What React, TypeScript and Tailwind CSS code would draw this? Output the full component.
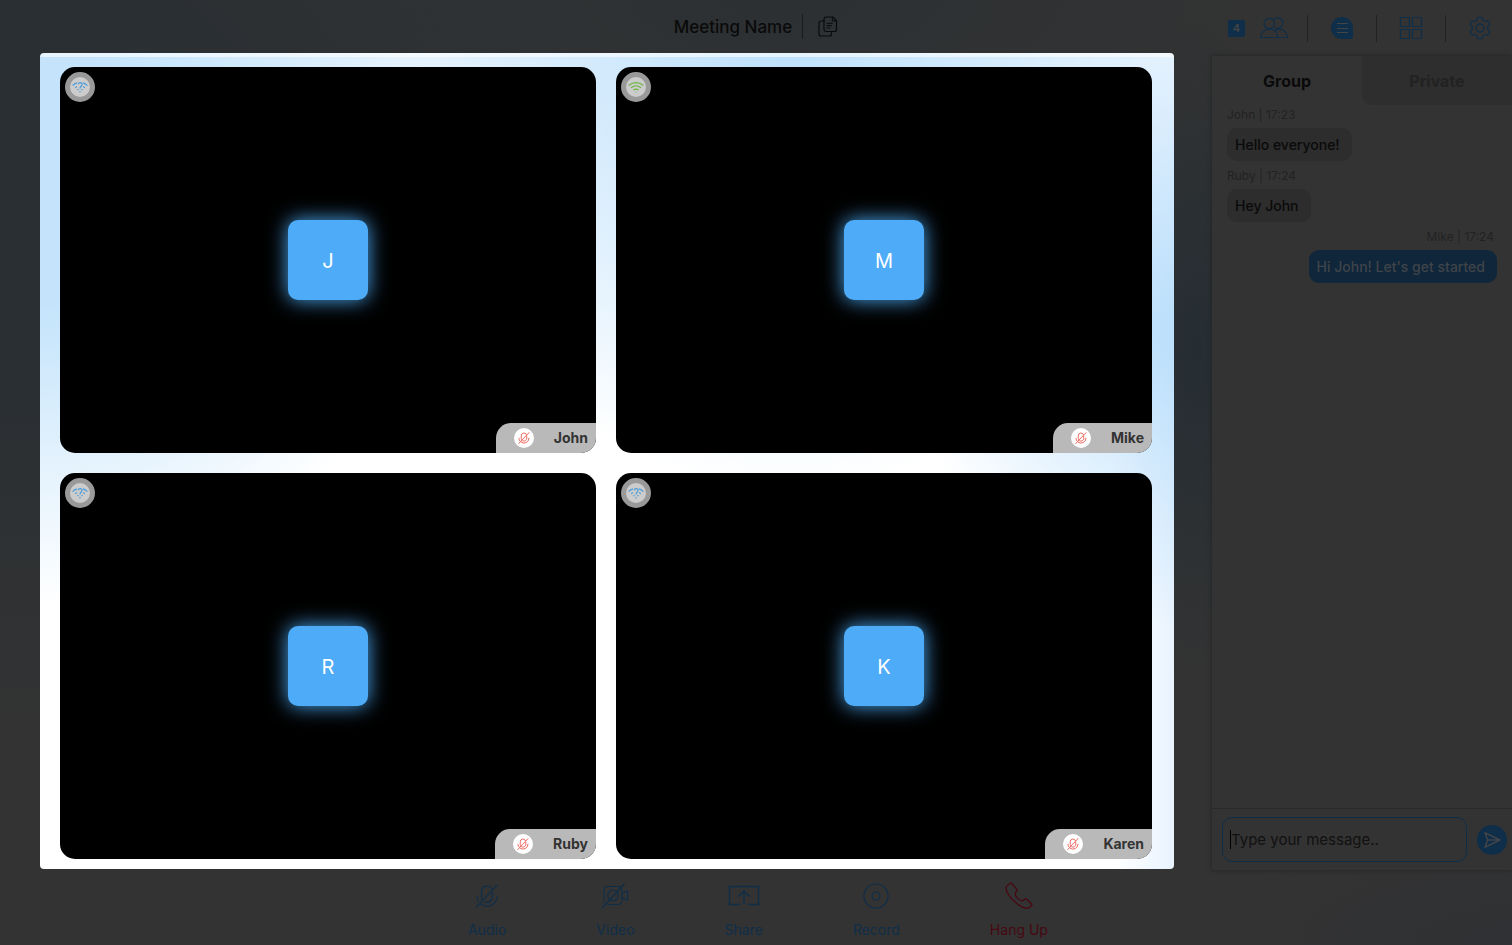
import React from "react";

type Participant = { name: string; known: boolean };

const participants: Participant[] = [
  { name: "John", known: false },
  { name: "Mike", known: true },
  { name: "Ruby", known: false },
  { name: "Karen", known: false },
];

const messages = [
  { from: "John", time: "17:23", text: "Hello everyone!", own: false },
  { from: "Ruby", time: "17:24", text: "Hey John", own: false },
  { from: "Mike", time: "17:24", text: "Hi John! Let's get started", own: true },
];

function CopyIcon() {
  return (
    <svg width="20" height="22" viewBox="0 0 20 22" fill="none" stroke="currentColor" strokeWidth="1.2" strokeLinejoin="round" strokeLinecap="round">
      <path d="M8 1h6.700L18.500 4.800v8.700a2 2 0 0 1-2 2H8a2 2 0 0 1-2-2V3a2 2 0 0 1 2-2Z" />
      <path d="M14.300 1.200v3.800h4M9 7.300h5.300M9 9.600h4.500M9 11.900h3" strokeWidth="1" />
      <path d="M5.800 5H3a2 2 0 0 0-2 2v11a2 2 0 0 0 2 2h8.500a2 2 0 0 0 2-2v-2.300" />
    </svg>
  );
}

function PeopleIcon() {
  return (
    <svg width="28" height="22" viewBox="0 0 28 22" fill="none" stroke="currentColor" strokeWidth="1.2" strokeLinejoin="round">
      <circle cx="9.300" cy="6.500" r="5.200" />
      <path d="M13.700 2.700a5.200 5.200 0 1 1 .9 7.500" />
      <path d="M.7 20.500c.4-5 3.800-8.300 8.600-8.300s8.200 3.300 8.600 8.300Z" />
      <path d="M14.800 14c1.200-1.100 2.600-1.800 4.300-1.800 4.600 0 7.800 3.300 8.200 8.300h-9.400" />
    </svg>
  );
}

function ChatIcon() {
  return (
    <svg width="24" height="24" viewBox="0 0 24 24">
      <path d="M12 1a11 11 0 1 0 0 22h9a2 2 0 0 0 2-2v-9A11 11 0 0 0 12 1Z" fill="currentColor" />
      <path d="M7.500 7.500h10M7.500 12.500h10M7.500 16.500h10" stroke="#444" strokeWidth="1.200" strokeLinecap="round" />
    </svg>
  );
}

function GridIcon() {
  return (
    <svg width="24" height="24" viewBox="0 0 24 24" fill="none" stroke="currentColor" strokeWidth="1.200">
      <path d="M1.500 1.500h9v9h-9zM13.500 1.500h9v9h-9zM1.500 13.500h9v9h-9zM13.500 13.500h9v9h-9z" />
    </svg>
  );
}

function GearIcon() {
  return (
    <svg width="24" height="24" viewBox="0 0 24 24" fill="none" stroke="currentColor" strokeWidth="1.200" strokeLinejoin="round">
      <path d="M10.300 1.300h3.400q.6 0 .7.600l.4 2.400 2.100 1.200 2.300-.8q.6-.2.900.3l1.700 3q.3.500-.2.900l-1.900 1.800v2.600l1.900 1.800q.5.400.2.900l-1.700 3q-.3.500-.9.300l-2.300-.8-2.100 1.200-.4 2.400q-.1.600-.7.600h-3.400q-.6 0-.7-.6l-.4-2.400-2.100-1.200-2.300.8q-.6.200-.9-.3l-1.700-3q-.3-.5.200-.9l1.900-1.800v-2.600L2.400 8.900q-.5-.4-.2-.9l1.700-3q.3-.5.900-.3l2.300.8 2.100-1.200.4-2.400q.1-.6.700-.6Z" />
      <circle cx="12" cy="12" r="3.900" />
    </svg>
  );
}

function MicOffIcon({ className }: { className?: string }) {
  return (
    <svg className={className} viewBox="0 0 24 24" fill="none" stroke="currentColor" strokeLinecap="round">
      <path d="M7.500 16.200a5.500 5.500 0 0 1-1-3.200V7.500a5.500 5.500 0 0 1 10.600-2M17.500 8.500V13a5.500 5.500 0 0 1-8 4.800" />
      <path d="M2 12.500c0 1.800.5 3.400 1.400 4.900M6 20.200a10 10 0 0 0 16-7.700" />
      <path d="M1.500 23 22 1.200" />
    </svg>
  );
}

function VideoOffIcon() {
  return (
    <svg width="28" height="26" viewBox="0 0 28 26" fill="none" stroke="currentColor" strokeWidth="1.100" strokeLinecap="round" strokeLinejoin="round">
      <path d="M3.300 19a4 4 0 0 1-.3-1.500v-10a4 4 0 0 1 4-4h10q1 0 1.800.4M20.500 5.800q.5.800.5 1.700v10a4 4 0 0 1-4 4H7" />
      <circle cx="12" cy="12.500" r="5.300" />
      <path d="M21 10.500l5.500-3v10L21 14.500" />
      <path d="M1.500 24.500 23 1.200" strokeWidth="1.400" />
    </svg>
  );
}

function ShareIcon() {
  return (
    <svg width="32" height="24" viewBox="0 0 32 24" fill="none" stroke="currentColor" strokeWidth="1.400">
      <path d="M11.500 20.500H1.500v-18h29v18h-10M16 20.500V7.500M10.500 12.500 16 7l5.500 5.500" />
    </svg>
  );
}

function RecordIcon() {
  return (
    <svg width="26" height="26" viewBox="0 0 26 26" fill="none" stroke="currentColor" strokeWidth="1.200">
      <circle cx="13" cy="13" r="12" />
      <circle cx="13" cy="13" r="4" />
    </svg>
  );
}

function PhoneIcon() {
  return (
    <svg width="28" height="28" viewBox="0 0 28 28" fill="none" stroke="currentColor" strokeWidth="1.300" strokeLinejoin="round">
      <path d="M6.500 1.300 12 7.600c.4.500.4 1-.1 1.500-2.400 2-2.400 4.200.7 7.300 3.200 3 5.400 3.100 7.400.7.400-.5 1-.5 1.500-.1l5 5c.5.500.5 1 .1 1.500-2.800 3.600-6.900 4.400-14.700-1.900C4.700 15.200.5 9.500 1.100 5.700c.3-1.800 2.200-3.400 3.900-4.500.5-.4 1-.3 1.500.1Z" />
    </svg>
  );
}

function SignalIcon({ known }: { known: boolean }) {
  return known ? (
    <svg width="16" height="12" viewBox="0 0 16 12" fill="none" stroke="#6cb83f" strokeWidth="1.200" strokeLinecap="round">
      <path d="M1 4.200c4-3.500 10-3.500 14 0M3.500 6.500c2.700-2.100 6.300-2.100 9 0M5.800 8.800c1.400-.9 3-.9 4.400 0" />
      <circle cx="8" cy="11" r=".5" fill="#6cb83f" stroke="none" />
    </svg>
  ) : (
    <svg width="16" height="12" viewBox="0 0 16 12" fill="none" stroke="#4d9ddb" strokeWidth="1.200">
      <path d="M.6 4.600C1.900 3.300 3.400 2.400 5 1.900M15.400 4.600C14.100 3.300 12.600 2.400 11 1.900" />
      <path d="M3.200 6.700l1.700-1.100M12.800 6.700l-1.700-1.100" />
      <path d="M6.200 3.300c.2-2.300 3.700-2.300 3.900-.2.100 1.900-2.100 1.900-2.100 4.500" />
      <path d="M5.200 8.700h1.600M9.200 8.700h1.600M7.200 10.900h1.600" strokeWidth="1" />
    </svg>
  );
}

function Tile({ name, known }: Participant) {
  return (
    <section aria-label={name} className="relative flex items-center justify-center overflow-hidden rounded-[15px] bg-black">
      <div className="absolute top-[5px] left-[5px] flex size-[30px] items-center justify-center rounded-full border-5 border-[#999] bg-[#ccc]">
        <SignalIcon known={known} />
      </div>
      <div className="flex size-20 items-center justify-center rounded-[10px] bg-[#4dabf7] pt-0.5 text-xl text-white shadow-[0_0_20px_0_#4dabf7]">
        {name[0]}
      </div>
      <div className="absolute right-0 bottom-0 flex h-[30px] items-center gap-5 rounded-tl-[15px] bg-[#b9b9b9] pr-2 pl-[18px] text-sm font-bold text-[#333]">
        <span className="flex size-5 items-center justify-center rounded-full bg-white text-[#ea5a50]">
          <MicOffIcon className="size-3 stroke-[1.8]" />
        </span>
        {name}
      </div>
    </section>
  );
}

function Divider() {
  return <span className="h-[27px] w-px bg-[#222]" />;
}

function Control({ label, danger, children }: { label: string; danger?: boolean; children: React.ReactNode }) {
  return (
    <button className={`flex flex-col items-center text-sm ${danger ? "text-[#480812]" : "text-[#0f2e49]"}`}>
      <span className="flex h-[53px] items-center justify-center">{children}</span>
      <span className="leading-4">{label}</span>
    </button>
  );
}

export default function App() {
  return (
    <div className="flex min-h-screen flex-col bg-[#333] bg-[radial-gradient(ellipse_620px_560px_at_2%_20%,#2a2f33_30%,transparent),radial-gradient(ellipse_500px_180px_at_52%_0%,#2c3033,transparent),radial-gradient(ellipse_110px_330px_at_79%_37%,#252d33,transparent),radial-gradient(ellipse_300px_120px_at_100%_100%,#303134,transparent)] font-['Inter','Liberation_Sans',sans-serif] text-[#0a0a0a]">
      <header className="grid h-[53px] grid-cols-[1fr_auto_1fr] items-center">
        <span />
        <div className="flex items-center">
          <h1 className="text-[17px] leading-7 font-medium">Meeting Name</h1>
          <span className="mr-[15px] ml-2.5 h-[25px] w-px bg-[#1a1a1a]" />
          <button aria-label="Copy meeting link">
            <CopyIcon />
          </button>
        </div>
        <nav className="flex items-center justify-end gap-[22px] pt-[3px] pr-5 text-[#0f2e49]">
          <button aria-label="Participants" className="-mr-[3px] flex items-center gap-[15px]">
            <span className="flex size-[17px] items-center justify-center rounded-xs bg-[#0f2e49] text-[11px] font-semibold text-[#444]">4</span>
            <PeopleIcon />
          </button>
          <Divider />
          <button aria-label="Chat">
            <ChatIcon />
          </button>
          <Divider />
          <button aria-label="Layout">
            <GridIcon />
          </button>
          <Divider />
          <button aria-label="Settings">
            <GearIcon />
          </button>
        </nav>
      </header>

      <div className="flex flex-1">
        <main className="mr-[38px] ml-10 grid flex-1 grid-cols-2 grid-rows-2 gap-5 rounded-sm bg-white bg-[linear-gradient(#ffffff99_4px,transparent_4px),radial-gradient(ellipse_300px_300px_at_103%_34%,#b9defb_5%,transparent),radial-gradient(ellipse_380px_440px_at_66%_0%,#bfe1fb,transparent),radial-gradient(ellipse_400px_430px_at_0%_15%,#c5e4fb_30%,transparent),linear-gradient(to_left,#e8f3fe,transparent_60px),linear-gradient(#e6f3fd,transparent_380px)] pt-3.5 pr-[22px] pb-2.5 pl-5">
          {participants.map((p) => (
            <Tile key={p.name} {...p} />
          ))}
        </main>

        <aside className="mt-[3px] -mb-px flex w-[300px] flex-col bg-[#333] shadow-[0_0_4px_#222]">
          <div role="tablist" className="grid h-[49px] grid-cols-2 font-bold">
            <button role="tab" aria-selected="true">Group</button>
            <button role="tab" aria-selected="false" className="rounded-bl-[10px] bg-[#2e2e2e] text-[#222]">Private</button>
          </div>
          <ul className="flex flex-1 flex-col gap-[7px] px-[15px] pt-0.5">
            {messages.map((m) => (
              <li key={m.text} className={`flex flex-col gap-[5px] ${m.own ? "items-end" : "items-start"}`}>
                <span className={`text-xs leading-4 text-[#222] ${m.own ? "pr-[3px]" : ""}`}>
                  {m.from} | {m.time}
                </span>
                <p className={`flex h-[33px] items-center rounded-[10px] pr-3 pl-2 text-sm font-medium ${m.own ? "bg-[#0f263b] text-[#3f4449]" : "bg-[#2d2d2d]"}`}>
                  {m.text}
                </p>
              </li>
            ))}
          </ul>
          <form className="flex items-center gap-2.5 border-t border-[#292929] py-2 pr-[5px] pl-2.5" onSubmit={(e) => e.preventDefault()}>
            <div className="relative flex min-w-0 flex-1">
              <input
                aria-label="Message"
                placeholder="Type your message.."
                className="h-[45px] w-full min-w-0 rounded-[10px] border border-[#0f2e49] bg-transparent px-2 text-[15px] outline-none placeholder:text-[#111]"
              />
              <span className="absolute top-[13px] left-2 h-[19px] w-px bg-black" />
            </div>
            <button aria-label="Send" className="flex size-[30px] items-center justify-center rounded-full bg-[#0f2e49] text-[#3f4449]">
              <svg width="18" height="18" viewBox="0 0 18 18" fill="none" stroke="currentColor" strokeWidth="1.500" strokeLinejoin="round">
                <path d="M2 1.800 17 9 2 16.200 4.600 9 2 1.800ZM4.600 9H17" />
              </svg>
            </button>
          </form>
        </aside>
      </div>

      <footer className="flex h-[76px] justify-center gap-[90px] pl-1">
        <Control label="Audio">
          <MicOffIcon className="size-6 stroke-[1.2]" />
        </Control>
        <Control label="Video">
          <VideoOffIcon />
        </Control>
        <Control label="Share">
          <ShareIcon />
        </Control>
        <Control label="Record">
          <RecordIcon />
        </Control>
        <Control label="Hang Up" danger>
          <PhoneIcon />
        </Control>
      </footer>
    </div>
  );
}
